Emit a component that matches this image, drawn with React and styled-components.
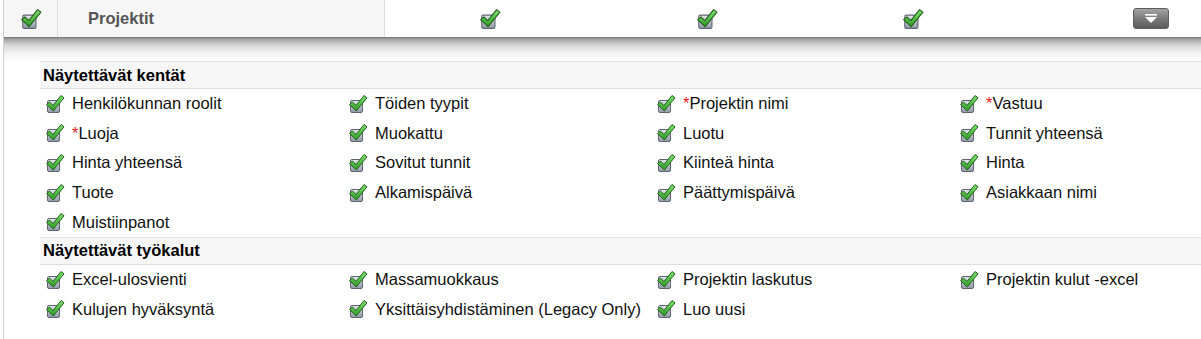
import React from "react";
import styled, { createGlobalStyle } from "styled-components";

const Global = createGlobalStyle`
  html, body {
    margin: 0;
    padding: 0;
    background: #fff;
    font-family: "Liberation Sans", Arial, sans-serif;
  }
`;

const Panel = styled.div`
  margin-left: 3px;
  border-left: 1px solid #cfcfcf;
  min-height: 339px;
  box-sizing: border-box;
`;

const HeaderBar = styled.div`
  display: grid;
  grid-template-columns: 54px 327px 210px 224px 188px 1fr;
  height: 37px;
  align-items: stretch;
`;

const HeadCell = styled.div`
  display: flex;
  align-items: center;
  justify-content: ${({ $align }) => $align || "center"};
  background: ${({ $shaded }) => ($shaded ? "#f6f6f6" : "#fff")};
  border-right: ${({ $divider }) => ($divider ? "1px solid #dedede" : "none")};
  padding: ${({ $pad }) => $pad || "0"};
  box-sizing: border-box;
`;

const Title = styled.span`
  font-weight: bold;
  font-size: 16.5px;
  color: #555;
`;

const Shadow = styled.div`
  height: 24px;
  background: linear-gradient(#727272 0px, #a0a0a0 2px, #d6d6d6 8px, #f2f2f2 16px, #fff 24px);
`;

const Body = styled.div`
  padding-left: 36px;
`;

const SectionTitle = styled.div`
  height: 28px;
  display: flex;
  align-items: center;
  padding-left: 3px;
  background: #f6f6f6;
  border-top: 1px solid #e2e2e2;
  border-bottom: 1px solid #dcdcdc;
  font-weight: bold;
  font-size: 16.5px;
  color: #000;
  box-sizing: border-box;
`;

const Grid = styled.div`
  display: grid;
  grid-template-columns: 303px 308px 303px 1fr;
`;

const Item = styled.div`
  height: 29.6px;
  display: flex;
  align-items: center;
  gap: 7px;
  padding-left: 5px;
  font-size: 16.5px;
  color: #111;
  white-space: nowrap;
`;

const Req = styled.span`
  color: #e41b1b;
`;

const DropButton = styled.button`
  width: 36px;
  height: 21px;
  border: 1px solid #5e5e5e;
  border-radius: 3px;
  background: linear-gradient(#a4a4a4, #7a7a7a 50%, #5c5c5c);
  display: flex;
  align-items: center;
  justify-content: center;
  padding: 0;
  cursor: pointer;
`;

const Check = ({ size = 20 }) => (
  <svg width={size} height={size} viewBox="0 0 20 20">
    <defs>
      <linearGradient id="bx" x1="0" y1="0" x2="0" y2="1">
        <stop offset="0" stopColor="#e4e8ee" />
        <stop offset="1" stopColor="#8f99a6" />
      </linearGradient>
      <linearGradient id="gr" x1="0" y1="0" x2="0" y2="1">
        <stop offset="0" stopColor="#7fe070" />
        <stop offset="1" stopColor="#2f9a25" />
      </linearGradient>
    </defs>
    <rect x="2.5" y="6.5" width="12" height="12" rx="1.5" fill="url(#bx)" stroke="#5d6570" />
    <path
      d="M1.5 10.5 L4.5 8 L8 11.5 L16 1.5 L19 3.8 L8.3 17 Z"
      fill="url(#gr)"
      stroke="#24611b"
      strokeWidth="1"
      strokeLinejoin="round"
    />
  </svg>
);

const fields = [
  ["Henkilökunnan roolit"],
  ["Töiden tyypit"],
  ["Projektin nimi", true],
  ["Vastuu", true],
  ["Luoja", true],
  ["Muokattu"],
  ["Luotu"],
  ["Tunnit yhteensä"],
  ["Hinta yhteensä"],
  ["Sovitut tunnit"],
  ["Kiinteä hinta"],
  ["Hinta"],
  ["Tuote"],
  ["Alkamispäivä"],
  ["Päättymispäivä"],
  ["Asiakkaan nimi"],
  ["Muistiinpanot"],
];

const tools = [
  ["Excel-ulosvienti"],
  ["Massamuokkaus"],
  ["Projektin laskutus"],
  ["Projektin kulut -excel"],
  ["Kulujen hyväksyntä"],
  ["Yksittäisyhdistäminen (Legacy Only)"],
  ["Luo uusi"],
];

const List = ({ items }) => (
  <Grid>
    {items.map(([label, required]) => (
      <Item key={label}>
        <Check />
        <span>
          {required && <Req>*</Req>}
          {label}
        </span>
      </Item>
    ))}
  </Grid>
);

export default function App() {
  return (
    <>
      <Global />
      <Panel>
        <HeaderBar>
          <HeadCell $shaded $divider>
            <Check size={22} />
          </HeadCell>
          <HeadCell $shaded $divider $align="flex-start" $pad="0 0 0 30px">
            <Title>Projektit</Title>
          </HeadCell>
          <HeadCell>
            <Check size={22} />
          </HeadCell>
          <HeadCell>
            <Check size={22} />
          </HeadCell>
          <HeadCell>
            <Check size={22} />
          </HeadCell>
          <HeadCell $align="flex-end" $pad="0 32px 0 0">
            <DropButton aria-label="Avaa">
              <svg width="14" height="9" viewBox="0 0 14 9">
                <rect x="1" y="0" width="12" height="1.6" fill="#fff" />
                <path d="M1 3 L13 3 L7 9 Z" fill="#fff" />
              </svg>
            </DropButton>
          </HeadCell>
        </HeaderBar>
        <Shadow />
        <Body>
          <SectionTitle>Näytettävät kentät</SectionTitle>
          <List items={fields} />
          <SectionTitle>Näytettävät työkalut</SectionTitle>
          <List items={tools} />
        </Body>
      </Panel>
    </>
  );
}
